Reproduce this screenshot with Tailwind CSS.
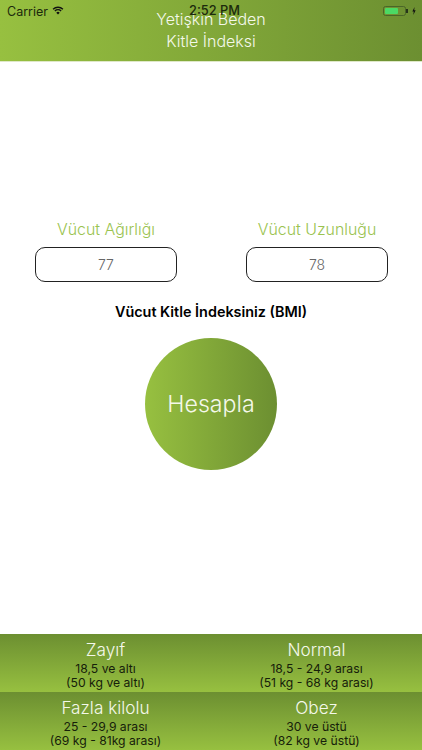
<!DOCTYPE html>
<html lang="tr">
<head>
<meta charset="utf-8">
<script src="https://cdn.jsdelivr.net/npm/@tailwindcss/browser@4"></script>
</head>
<body class="m-0 bg-white font-['Inter','Liberation_Sans',sans-serif]">
<div class="relative flex h-[750px] w-[422px] flex-col overflow-hidden bg-white">
  <div class="absolute left-0 right-0 top-0 z-10 h-[22px] text-black">
    <span class="absolute left-[7px] top-[4px] text-[12.5px] leading-4 text-[#1c2a0c]">Carrier</span>
    <svg class="absolute left-[52px] top-[6px]" width="12" height="9" viewBox="0 0 14 11" fill="none" stroke="#111" stroke-width="1.7">
      <path d="M1 4 A8.5 8.5 0 0 1 13 4"/>
      <path d="M3.2 6.2 A5.4 5.4 0 0 1 10.8 6.2"/>
      <path d="M7 10.4 L4.9 8.2 A3 3 0 0 1 9.1 8.2 Z" fill="#111" stroke="none"/>
    </svg>
    <span class="absolute left-[189px] top-[3px] text-[12.8px] font-medium leading-4 text-[#1c2a0c]">2:52 PM</span>
    <div class="absolute left-[383px] top-[6px] h-[10px] w-[23px] rounded-[2.5px] border border-[#4a6528] p-px">
      <div class="h-full w-[13px] rounded-[1px] bg-[#4cd964]"></div>
    </div>
    <div class="absolute left-[406px] top-[9px] h-[4px] w-[1.5px] bg-[#26341a]"></div>
    <svg class="absolute left-[412px] top-[7px]" width="4" height="8" viewBox="0 0 6 10" preserveAspectRatio="none"><path d="M3.8 0 L0.5 5.6 H2.6 L2 10 L5.5 4.2 H3.3 Z" fill="#111"/></svg>
  </div>

  <header class="flex h-[62px] shrink-0 items-start justify-center border-b border-[#dfe8c8] bg-[linear-gradient(90deg,#97c040,#6c8f31)] pt-[8px] text-center text-[16px] leading-[22px] text-[#f4f8ea]">
    <h1 class="font-light">Yetişkin Beden<br>Kitle İndeksi</h1>
  </header>

  <main class="flex flex-1 flex-col items-center pt-[158px]">
    <div class="flex w-full justify-between pl-[35px] pr-[34px]">
      <div class="flex w-[142px] flex-col items-center gap-[7px]">
        <span class="text-[15.9px] font-light leading-5 text-[#9ac350]">Vücut Ağırlığı</span>
        <div class="flex h-[35px] w-full items-center justify-center rounded-[10px] border border-[#222] text-[14px] font-light text-[#666]">77</div>
      </div>
      <div class="flex w-[142px] flex-col items-center gap-[7px]">
        <span class="text-[15.9px] font-light leading-5 text-[#9ac350]">Vücut Uzunluğu</span>
        <div class="flex h-[35px] w-full items-center justify-center rounded-[10px] border border-[#222] text-[14px] font-light text-[#666]">78</div>
      </div>
    </div>
    <p class="mt-[20px] text-[14.4px] font-semibold leading-5 text-black">Vücut Kitle İndeksiniz (BMI)</p>
    <button class="mt-[16px] flex h-[132px] w-[132px] items-center justify-center rounded-full bg-[linear-gradient(90deg,#97c040,#6c8f31)] text-[23.2px] font-light text-[#f4f8ea]">Hesapla</button>
  </main>

  <section class="grid shrink-0 grid-cols-2 text-center">
    <div class="col-span-2 grid h-[58px] grid-cols-2 bg-[linear-gradient(180deg,#6c8f31,#97c040)]">
      <div class="flex flex-col items-center pt-[3px]">
        <span class="text-[17.2px] font-light leading-[25px] text-[#f4f8ea]">Zayıf</span>
        <span class="text-[12.2px] leading-[14px] text-[#16200a]">18,5 ve altı</span>
        <span class="text-[12.2px] leading-[14px] text-[#16200a]">(50 kg ve altı)</span>
      </div>
      <div class="flex flex-col items-center pt-[3px]">
        <span class="text-[17.2px] font-light leading-[25px] text-[#f4f8ea]">Normal</span>
        <span class="text-[12.2px] leading-[14px] text-[#16200a]">18,5 - 24,9 arası</span>
        <span class="text-[12.2px] leading-[14px] text-[#16200a]">(51 kg - 68 kg arası)</span>
      </div>
    </div>
    <div class="col-span-2 grid h-[58px] grid-cols-2 bg-[linear-gradient(180deg,#6c8f31,#97c040)]">
      <div class="flex flex-col items-center pt-[3px]">
        <span class="text-[17.2px] font-light leading-[25px] text-[#f4f8ea]">Fazla kilolu</span>
        <span class="text-[12.2px] leading-[14px] text-[#16200a]">25 - 29,9 arası</span>
        <span class="text-[12.2px] leading-[14px] text-[#16200a]">(69 kg - 81kg arası)</span>
      </div>
      <div class="flex flex-col items-center pt-[3px]">
        <span class="text-[17.2px] font-light leading-[25px] text-[#f4f8ea]">Obez</span>
        <span class="text-[12.2px] leading-[14px] text-[#16200a]">30 ve üstü</span>
        <span class="text-[12.2px] leading-[14px] text-[#16200a]">(82 kg ve üstü)</span>
      </div>
    </div>
  </section>
</div>
</body>
</html>
